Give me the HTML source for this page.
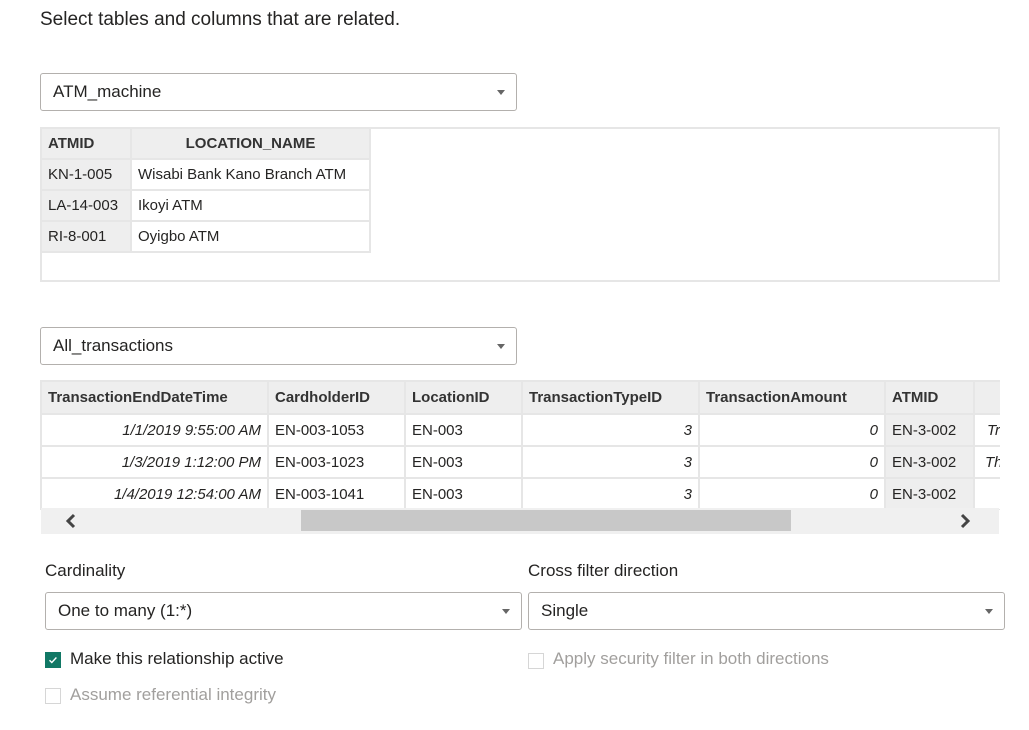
<!DOCTYPE html>
<html><head><style>
body{margin:0;width:1029px;height:730px;background:#fff;font-family:"Liberation Sans",sans-serif;color:#252423;position:relative;overflow:hidden}
.a{position:absolute}
.dd{position:absolute;border:1px solid #b3b0ad;border-radius:3px;background:#fff;font-size:17px;box-sizing:border-box;padding-left:12px;display:flex;align-items:center}
.dd:after{content:"";position:absolute;right:11px;top:50%;margin-top:-2px;border-left:4px solid transparent;border-right:4px solid transparent;border-top:5px solid #666}
table{border-collapse:collapse;font-size:15px;table-layout:fixed}
td{border:2px solid #e6e6e6;padding:0 6px;white-space:nowrap;overflow:hidden;box-sizing:border-box}
th{background:#eeeeee;border:2px solid #e6e6e6;text-align:left;padding:0 6px;font-weight:bold;color:#333;white-space:nowrap;overflow:hidden;box-sizing:border-box}
.g{background:#eeeeee}
.r{text-align:right;font-style:italic}
.cb{position:absolute;width:16px;height:16px;box-sizing:border-box;border:1px solid #d6d6d6;background:#fff}
.lbl{position:absolute;font-size:17px}
.t1 tr{height:31px}
.t2 tr{height:32px}
</style></head><body>
<div class="a" style="left:40px;top:9px;font-size:19px">Select tables and columns that are related.</div>
<div class="dd" style="left:40px;top:73px;width:477px;height:38px">ATM_machine</div>
<div class="a" style="left:40px;top:127px;width:960px;height:155px;border:2px solid #e6e6e6;box-sizing:border-box"></div>
<table class="a t1" style="left:40px;top:127px;width:329px">
<colgroup><col style="width:90px"><col style="width:239px"></colgroup>
<tr><th>ATMID</th><th style="text-align:center">LOCATION_NAME</th></tr>
<tr><td class="g">KN-1-005</td><td>Wisabi Bank Kano Branch ATM</td></tr>
<tr><td class="g">LA-14-003</td><td>Ikoyi ATM</td></tr>
<tr><td class="g">RI-8-001</td><td>Oyigbo ATM</td></tr>
</table>
<div class="dd" style="left:40px;top:327px;width:477px;height:38px">All_transactions</div>
<div class="a" style="left:40px;top:380px;width:960px;height:130px;overflow:hidden">
<table class="t2" style="width:962px">
<colgroup><col style="width:227px"><col style="width:137px"><col style="width:117px"><col style="width:177px"><col style="width:186px"><col style="width:89px"><col style="width:29px"></colgroup>
<tr style="height:33px"><th>TransactionEndDateTime</th><th>CardholderID</th><th>LocationID</th><th>TransactionTypeID</th><th>TransactionAmount</th><th>ATMID</th><th></th></tr>
<tr><td class="r">1/1/2019 9:55:00 AM</td><td>EN-003-1053</td><td>EN-003</td><td class="r">3</td><td class="r">0</td><td class="g">EN-3-002</td><td style="font-style:italic;padding:0 0 0 12px">Tr</td></tr>
<tr><td class="r">1/3/2019 1:12:00 PM</td><td>EN-003-1023</td><td>EN-003</td><td class="r">3</td><td class="r">0</td><td class="g">EN-3-002</td><td style="font-style:italic;padding:0 0 0 10px">Th</td></tr>
<tr><td class="r">1/4/2019 12:54:00 AM</td><td>EN-003-1041</td><td>EN-003</td><td class="r">3</td><td class="r">0</td><td class="g">EN-3-002</td><td></td></tr>
</table></div>
<div class="a" style="left:41px;top:508px;width:958px;height:26px;background:#f0f0f0"></div>
<div class="a" style="left:301px;top:510px;width:490px;height:21px;background:#c8c8c8"></div>
<svg class="a" style="left:64px;top:513px" width="14" height="16" viewBox="0 0 14 16"><path d="M10 2L4 8l6 6" stroke="#444" stroke-width="3" fill="none"/></svg>
<svg class="a" style="left:958px;top:513px" width="14" height="16" viewBox="0 0 14 16"><path d="M4 2l6 6-6 6" stroke="#444" stroke-width="3" fill="none"/></svg>
<div class="lbl" style="left:45px;top:561px">Cardinality</div>
<div class="lbl" style="left:528px;top:561px">Cross filter direction</div>
<div class="dd" style="left:45px;top:592px;width:477px;height:38px">One to many (1:*)</div>
<div class="dd" style="left:528px;top:592px;width:477px;height:38px">Single</div>
<div class="cb" style="left:45px;top:652px;background:#117865;border-color:#117865"><svg width="14" height="14" viewBox="0 0 14 14" style="position:absolute;left:0;top:0"><path d="M3.5 7.2l2.3 2.3 4.6-5" stroke="#fff" stroke-width="1.4" fill="none"/></svg></div>
<div class="lbl" style="left:70px;top:649px">Make this relationship active</div>
<div class="cb" style="left:528px;top:653px"></div>
<div class="lbl" style="left:553px;top:649px;color:#a19f9d">Apply security filter in both directions</div>
<div class="cb" style="left:45px;top:688px"></div>
<div class="lbl" style="left:70px;top:685px;color:#a19f9d">Assume referential integrity</div>
</body></html>
